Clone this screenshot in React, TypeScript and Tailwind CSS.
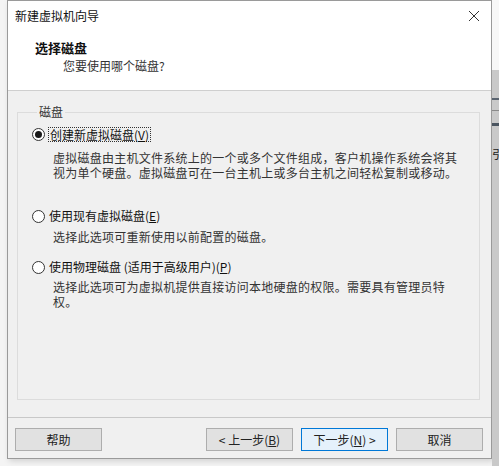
import React from "react";

const font = { fontFamily: '"Noto Sans CJK SC", "Noto Sans", sans-serif' };

function Radio({ checked }: { checked?: boolean }) {
  return (
    <span className="flex h-[13px] w-[13px] shrink-0 items-center justify-center rounded-full border border-[#333] bg-white">
      {checked && <span className="h-[7px] w-[7px] rounded-full bg-[#1a1a1a]" />}
    </span>
  );
}

function Btn({ children, primary }: { children: React.ReactNode; primary?: boolean }) {
  return (
    <button
      className={`flex h-[23px] w-[87px] items-center justify-center border text-[12px] leading-none text-[#222] ${
        primary ? "border-[#0078d7] bg-[#e5f1fb]" : "border-[#adadad] bg-[#e1e1e1]"
      }`}
    >
      {children}
    </button>
  );
}

export default function App() {
  return (
    <div className="flex h-[466px] w-[499px] overflow-hidden bg-[#f4f4f4]" style={font}>
      <div className="w-[7px] shrink-0" />

      {/* Dialog */}
      <div className="flex h-[459px] w-[485px] shrink-0 flex-col border border-[#9a9a9a] bg-[#f0f0f0] shadow-[2px_2px_6px_rgba(0,0,0,0.15)]">
        {/* Title bar */}
        <div className="flex h-[30px] items-center justify-between bg-white pl-[7px] pr-[10px]">
          <span className="text-[12px] text-[#111]">新建虚拟机向导</span>
          <svg width="12" height="12" viewBox="0 0 12 12" className="mr-[1px]">
            <path d="M1 1 L11 11 M11 1 L1 11" stroke="#333" strokeWidth="1" fill="none" />
          </svg>
        </div>

        {/* Header */}
        <div className="flex h-[60px] flex-col border-b border-[#cfcfcf] bg-white">
          <span className="ml-[27px] mt-[9px] text-[13px] font-bold leading-[16px] text-[#111]">选择磁盘</span>
          <span className="ml-[55px] mt-[2px] text-[12px] leading-[16px] text-[#333]">您要使用哪个磁盘?</span>
        </div>

        {/* Body */}
        <div className="flex flex-1 flex-col px-[9px] pt-[13px]">
          <fieldset className="mr-[2px] h-[296px] border border-[#dcdcdc] pl-[14px]">
            <legend className="ml-[5px] px-[2px] text-[12px] leading-[16px] text-[#333]">磁盘</legend>

            <div className="mt-[6px] flex h-[16px] items-center gap-[3px]">
              <Radio checked />
              <span className="border border-dotted border-[#333] px-[1px] text-[12px] leading-[13px] text-[#111]">
                创建新虚拟磁盘(<span className="underline">V</span>)
              </span>
            </div>
            <p className="ml-[21px] mt-[8px] text-[12px] leading-[15px] tracking-[0.25px] text-[#333]">
              虚拟磁盘由主机文件系统上的一个或多个文件组成，客户机操作系统会将其
              <br />
              视为单个硬盘。虚拟磁盘可在一台主机上或多台主机之间轻松复制或移动。
            </p>

            <div className="mt-[28px] flex h-[16px] items-center gap-[4px]">
              <Radio />
              <span className="text-[12px] text-[#111]">
                使用现有虚拟磁盘(<span className="underline">E</span>)
              </span>
            </div>
            <p className="ml-[21px] mt-[5px] text-[12px] leading-[15px] tracking-[0.25px] text-[#333]">
              选择此选项可重新使用以前配置的磁盘。
            </p>

            <div className="mt-[15px] flex h-[16px] items-center gap-[4px]">
              <Radio />
              <span className="text-[12px] text-[#111]">
                使用物理磁盘 (适用于高级用户)(<span className="underline">P</span>)
              </span>
            </div>
            <p className="ml-[21px] mt-[4px] text-[12px] leading-[15px] tracking-[0.25px] text-[#333]">
              选择此选项可为虚拟机提供直接访问本地硬盘的权限。需要具有管理员特
              <br />
              权。
            </p>
          </fieldset>
        </div>

        {/* Footer */}
        <div className="flex h-[41px] items-start border-t border-[#c8c8c8] pl-[7px] pr-[8px] pt-[10px]">
          <Btn>帮助</Btn>
          <div className="ml-auto flex gap-[8px]">
            <Btn>
              &lt; 上一步(<span className="underline">B</span>)
            </Btn>
            <Btn primary>
              下一步(<span className="underline">N</span>) &gt;
            </Btn>
            <Btn>取消</Btn>
          </div>
        </div>
      </div>

      {/* Window behind */}
      <div className="flex w-[7px] shrink-0 flex-col">
        <div className="h-[70px] bg-[#f7f7f7]" />
        <div className="flex flex-1 flex-col bg-[#c9c9c9]">
          <div className="mt-[28px] h-[2px] bg-[#5a6470]" />
          <div className="mt-[10px] h-[1px] bg-[#8a8a8a]" />
          <div className="mt-[12px] h-[3px] bg-[#4a5560]" />
          <span className="mt-[22px] text-[12px] leading-none text-[#222]">引</span>
        </div>
      </div>
    </div>
  );
}
